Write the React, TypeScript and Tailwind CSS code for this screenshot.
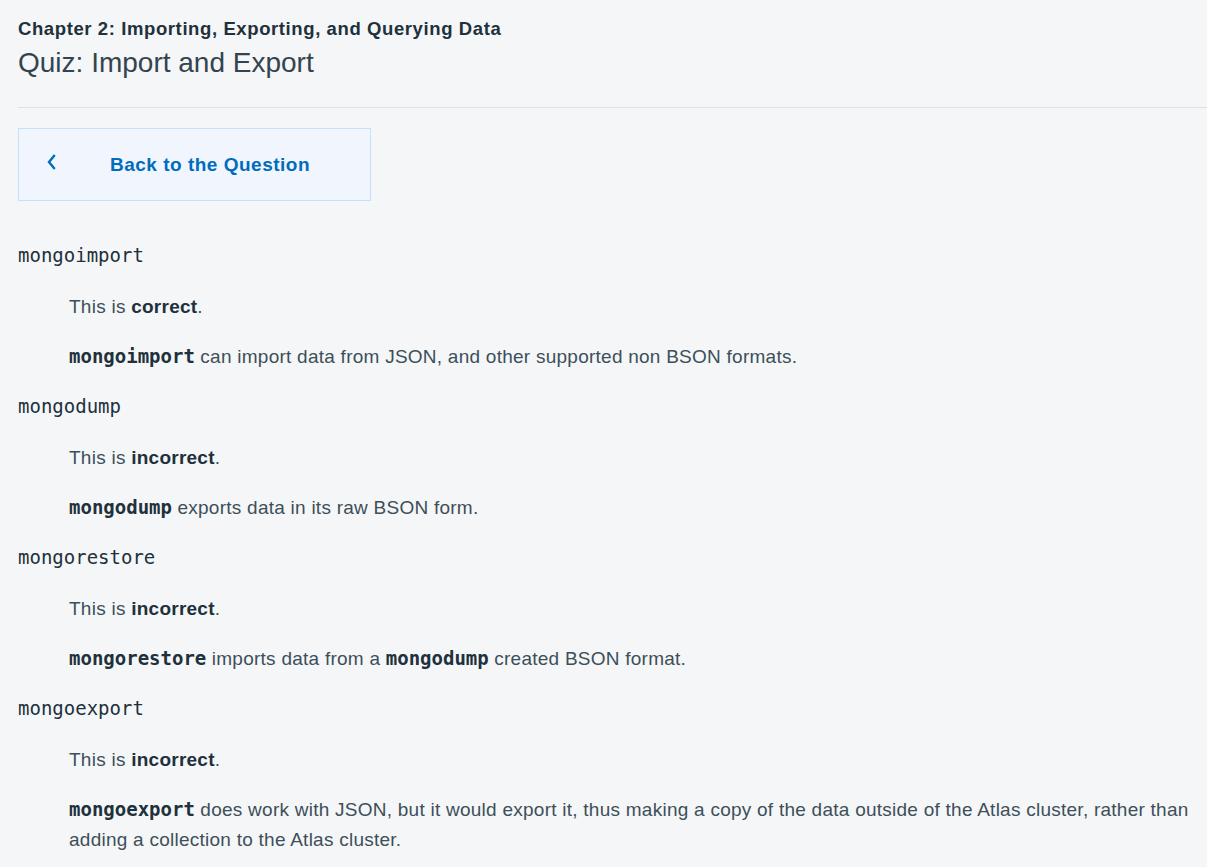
import { ReactNode } from 'react'

const answers: { cmd: string; verdict: string; note: ReactNode }[] = [
  {
    cmd: 'mongoimport',
    verdict: 'correct',
    note: (
      <>
        <code>mongoimport</code> can import data from JSON, and other supported non BSON formats.
      </>
    ),
  },
  {
    cmd: 'mongodump',
    verdict: 'incorrect',
    note: (
      <>
        <code>mongodump</code> exports data in its raw BSON form.
      </>
    ),
  },
  {
    cmd: 'mongorestore',
    verdict: 'incorrect',
    note: (
      <>
        <code>mongorestore</code> imports data from a <code>mongodump</code> created BSON format.
      </>
    ),
  },
  {
    cmd: 'mongoexport',
    verdict: 'incorrect',
    note: (
      <>
        <code>mongoexport</code> does work with JSON, but it would export it, thus making a copy of the data outside of the Atlas cluster, rather than adding a collection to the Atlas cluster.
      </>
    ),
  },
]

export default function App() {
  return (
    <div className="min-h-[867px] bg-[#f5f6f8] pl-[18px] pt-[18px] pb-4 text-[#21313c] font-['Liberation_Sans',Arial,sans-serif]">
      {/* Header */}
      <p className="text-[18.5px] font-bold leading-[22px] tracking-[0.6px]">
        Chapter 2: Importing, Exporting, and Querying Data
      </p>
      <h1 className="mt-[5px] text-[28px] leading-[36px] font-light text-[#34444e]">Quiz: Import and Export</h1>
      <div className="mt-[26px] border-t border-[#dee0e3]" />

      {/* Back button */}
      <button className="mt-5 flex h-[73px] w-[353px] items-center border border-[#c3e0fd] bg-[#f1f6fe] text-[#006cbc]">
        <svg className="ml-[27px] mt-[-6px]" width="10" height="16" viewBox="0 0 10 16" fill="none">
          <path d="M8 2 L3 8 L8 14" stroke="currentColor" strokeWidth="2.4" strokeLinecap="square" />
        </svg>
        <span className="ml-[54px] mt-[2px] text-[19px] font-bold tracking-[0.5px]">Back to the Question</span>
      </button>

      {/* Answers */}
      <div className="mt-[39px] flex flex-col">
        {answers.map(a => (
          <div key={a.cmd} className="flex flex-col">
            <div className="font-['DejaVu_Sans_Mono',monospace] text-[19px] leading-[30px]">{a.cmd}</div>
            <p className="mt-[22px] pl-[51px] text-[19px] leading-[30px] tracking-[0.25px] text-[#3d4f58]">
              This is <b className="font-bold text-[#21313c]">{a.verdict}</b>.
            </p>
            <p className="mt-[19px] mb-[19px] pl-[51px] pr-3 text-[19px] leading-[30px] tracking-[0.25px] text-[#3d4f58] [&_code]:font-['DejaVu_Sans_Mono',monospace] [&_code]:text-[19px] [&_code]:tracking-normal [&_code]:font-bold [&_code]:text-[#21313c]">
              {a.note}
            </p>
          </div>
        ))}
      </div>
    </div>
  )
}
